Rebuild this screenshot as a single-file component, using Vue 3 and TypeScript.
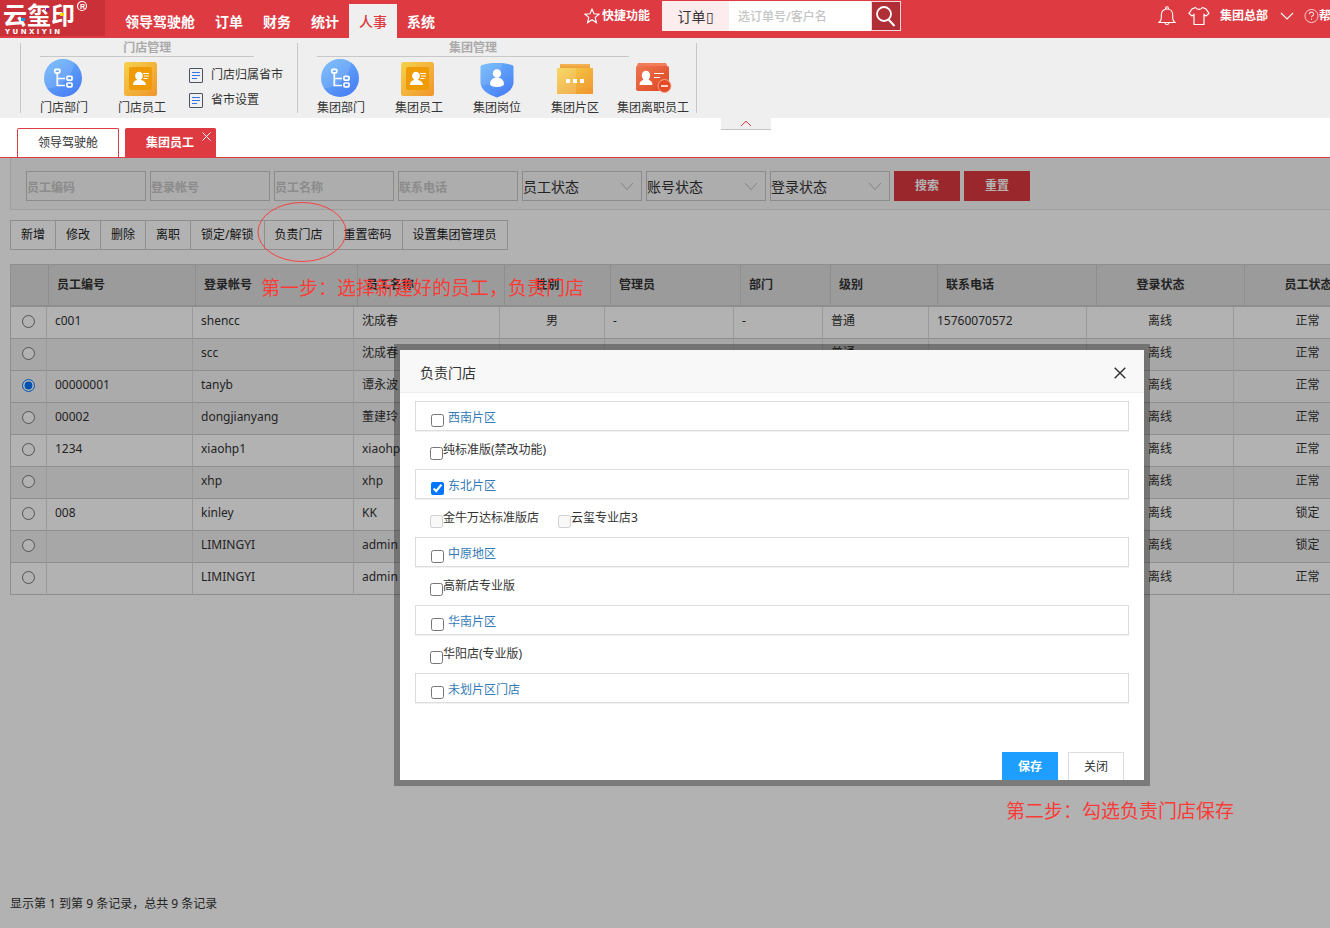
<script setup lang="ts">
import { ref } from 'vue'

interface Tool { label: string; icon: string }
interface Column { label: string; head: number; body: number; center?: boolean }
interface Store { name: string; locked?: boolean }
interface Area { name: string; checked: boolean; stores: Store[] }

const menus: string[] = ['领导驾驶舱', '订单', '财务', '统计', '人事', '系统']
const activeMenu = ref('人事')

const storeTools: Tool[] = [
  { label: '门店部门', icon: 'dept' },
  { label: '门店员工', icon: 'staff' },
]
const storeLinks: string[] = ['门店归属省市', '省市设置']
const groupTools: Tool[] = [
  { label: '集团部门', icon: 'dept' },
  { label: '集团员工', icon: 'staff' },
  { label: '集团岗位', icon: 'post' },
  { label: '集团片区', icon: 'area' },
  { label: '集团离职员工', icon: 'leave' },
]
const ribbon = [
  { title: '门店管理', tools: storeTools, links: storeLinks },
  { title: '集团管理', tools: groupTools, links: [] as string[] },
]

const textFilters: string[] = ['员工编码', '登录帐号', '员工名称', '联系电话']
const selectFilters: string[] = ['员工状态', '账号状态', '登录状态']
const actions: string[] = ['新增', '修改', '删除', '离职', '锁定/解锁', '负责门店', '重置密码', '设置集团管理员']

const columns: Column[] = [
  { label: '', head: 38, body: 36, center: true },
  { label: '员工编号', head: 147, body: 146 },
  { label: '登录帐号', head: 162, body: 161 },
  { label: '员工名称', head: 147, body: 146 },
  { label: '性别', head: 106, body: 105, center: true },
  { label: '管理员', head: 130, body: 129 },
  { label: '部门', head: 90, body: 89 },
  { label: '级别', head: 107, body: 106 },
  { label: '联系电话', head: 159, body: 158 },
  { label: '登录状态', head: 148, body: 147, center: true },
  { label: '员工状态', head: 148, body: 148, center: true },
]
const rows: string[][] = [
  ['c001', 'shencc', '沈成春', '男', '-', '-', '普通', '15760070572', '离线', '正常'],
  ['', 'scc', '沈成春', '', '', '', '普通', '', '离线', '正常'],
  ['00000001', 'tanyb', '谭永波', '', '', '', '', '', '离线', '正常'],
  ['00002', 'dongjianyang', '董建玲', '', '', '', '', '', '离线', '正常'],
  ['1234', 'xiaohp1', 'xiaohp1', '', '', '', '', '', '离线', '正常'],
  ['', 'xhp', 'xhp', '', '', '', '', '', '离线', '正常'],
  ['008', 'kinley', 'KK', '', '', '', '', '', '离线', '锁定'],
  ['', 'LIMINGYI', 'admin', '', '', '', '', '', '离线', '锁定'],
  ['', 'LIMINGYI', 'admin', '', '', '', '', '', '离线', '正常'],
]
const selected = ref(2)

const areas = ref<Area[]>([
  { name: '西南片区', checked: false, stores: [{ name: '纯标准版(禁改功能)' }] },
  { name: '东北片区', checked: true, stores: [{ name: '金牛万达标准版店', locked: true }, { name: '云玺专业店3', locked: true }] },
  { name: '中原地区', checked: false, stores: [{ name: '高新店专业版' }] },
  { name: '华南片区', checked: false, stores: [{ name: '华阳店(专业版)' }] },
  { name: '未划片区门店', checked: false, stores: [] },
])
</script>

<template>
  <div class="page">
    <svg class="defs" aria-hidden="true">
      <defs>
        <linearGradient id="g-blue" x1="0" y1="0" x2="0.7" y2="1"><stop offset="0" stop-color="#6db9fb" /><stop offset="1" stop-color="#4a80f5" /></linearGradient>
        <linearGradient id="g-gold" x1="0" y1="0" x2="1" y2="1"><stop offset="0" stop-color="#f5d24c" /><stop offset="1" stop-color="#f0952c" /></linearGradient>
        <linearGradient id="g-red" x1="0" y1="0" x2="1" y2="1"><stop offset="0" stop-color="#ec7650" /><stop offset="1" stop-color="#df4520" /></linearGradient>
      </defs>
    </svg>

    <header class="topbar">
      <a class="logo" href="#" aria-label="云玺印">
        <svg width="105" height="36" viewBox="0 0 105 36">
          <text class="logo-name" x="3" y="24">云玺印</text>
          <text class="logo-latin" x="5" y="34">Y U N X I Y I N</text>
          <rect x="21" y="18" width="4" height="3" fill="#00a0e9" />
          <rect x="46" y="8" width="3" height="3" fill="#8a1b8f" />
          <rect x="60" y="13" width="4" height="3" fill="#ffd800" />
          <circle cx="82" cy="6" r="4.500" fill="none" stroke="#fff" stroke-width="1.200" />
          <text class="logo-mark" x="80" y="9">R</text>
        </svg>
      </a>
      <nav class="menu">
        <a v-for="m in menus" :key="m" href="#" :class="{ active: m === activeMenu }" @click.prevent="activeMenu = m">{{ m }}</a>
      </nav>
      <a class="quick" href="#">
        <svg width="16" height="16" viewBox="0 0 16 16"><path d="M8 1.2 10 5.8 15 6.2 11.2 9.4 12.4 14.6 8 11.8 3.6 14.6 4.8 9.4 1 6.2 6 5.8Z" fill="none" stroke="#fff" stroke-width="1.2" /></svg>
        快捷功能
      </a>
      <form class="search" @submit.prevent>
        <button type="button" class="scope">订单▯</button>
        <input type="text" placeholder="选订单号/客户名" aria-label="选订单号/客户名" />
        <button type="submit" class="go" aria-label="查询">
          <svg width="22" height="24" viewBox="0 0 22 24"><circle cx="9" cy="10" r="7" fill="none" stroke="#fff" stroke-width="1.8" /><path d="M13.5 15.5 19.5 22" stroke="#fff" stroke-width="2" /></svg>
        </button>
      </form>
      <div class="account">
        <svg width="18" height="20" viewBox="0 0 18 20" fill="none" stroke="#fff" stroke-width="1.1"><path d="M7.6 3V2.2a1.4 1.4 0 0 1 2.8 0V3M1 16.5h16c-1.900-1.300-2.300-2.600-2.300-4.500V9c0-3.500-2.200-6-5.700-6S3.300 5.500 3.300 9v3c0 1.900-.4 3.200-2.300 4.500ZM7 17c.3 2 3.700 2 4 0" /></svg>
        <svg width="22" height="20" viewBox="0 0 22 20" fill="none" stroke="#fff" stroke-width="1.2"><path d="M7.500 1.500c1.500 2.500 5.500 2.500 7 0L18 3l3 4.500-3 2.500-2-1.500V18.500H6V8.500L4 10 1 7.500 4 3Z" /></svg>
        <a href="#" class="org">集团总部</a>
        <svg class="caret" width="14" height="8" viewBox="0 0 14 8"><path d="M1 1 7 7 13 1" fill="none" stroke="#fff" stroke-width="1.1" /></svg>
        <a href="#" class="help">
          <svg width="15" height="16" viewBox="0 0 16 16" fill="none" stroke="#fbd5d7"><circle cx="8" cy="8" r="7" /><path d="M5.700 6.200c0-3 4.600-3 4.600-.2C10.300 7.800 8 7.700 8 9.500M8 11v1.300" stroke-width="1.200" /></svg>帮助
        </a>
      </div>
    </header>

    <section class="ribbon">
      <div v-for="g in ribbon" :key="g.title" class="group">
        <div class="group-title">{{ g.title }}</div>
        <div class="group-body">
          <a v-for="t in g.tools" :key="t.label" class="tool" href="#">
            <svg v-if="t.icon === 'dept'" width="40" height="40" viewBox="0 0 40 40">
              <circle cx="19" cy="20" r="19" fill="url(#g-blue)" />
              <path d="M0 20a19 19 0 0 1 30-15C29 17 18 30 3 30.500A19 19 0 0 1 0 20Z" fill="#fff" opacity=".13" />
              <g fill="none" stroke="#fff" stroke-width="1.700"><rect x="10.800" y="11.300" width="5" height="3.600" rx=".8" /><path d="M13.300 15V27.500H21M13.300 20.500H21" /><rect x="23" y="18.300" width="5" height="3.800" rx=".8" /><rect x="23" y="25" width="5" height="3.800" rx=".8" /></g>
            </svg>
            <svg v-else-if="t.icon === 'staff'" width="40" height="40" viewBox="0 0 40 40">
              <rect x="2" y="4" width="33" height="34" rx="2.500" fill="url(#g-gold)" />
              <rect x="7" y="9" width="23" height="23" rx="2" fill="#ee9b05" />
              <path d="M11 27c0-3 1.600-4.200 4.300-5.200-3.500-2.300-2.700-8 1.700-8s5.200 5.700 1.700 8c2.700 1 5.300 2.200 5.300 5.200Z" fill="#fff" />
              <path d="M21 15.500h6M22 18h5M21.500 20.500h4" stroke="#fff" />
            </svg>
            <svg v-else-if="t.icon === 'post'" width="40" height="40" viewBox="0 0 40 40">
              <path d="M20 5c6 0 11 .5 15.500 2.300a2 2 0 0 1 1 1.700V24c0 8-8 12.500-16.500 15.500C11.500 36.500 3.500 32 3.500 24V9a2 2 0 0 1 1-1.700C9 5.500 14 5 20 5Z" fill="url(#g-blue)" />
              <path d="M3.500 9a2 2 0 0 1 1-1.700C11 5 19 5 25 5.300 24 18 15 28 4 27Z" fill="#fff" opacity=".1" />
              <circle cx="20" cy="15.500" r="4.200" fill="#fff" /><path d="M13 26c0-4.500 4-6.500 7-6.500s7 2 7 6.500c0 4-14 4-14 0Z" fill="#fff" />
            </svg>
            <svg v-else-if="t.icon === 'area'" width="40" height="40" viewBox="0 0 40 40">
              <rect x="5" y="6" width="30" height="5" fill="#f0a440" /><path d="M5 7h30" stroke="#f5bc68" />
              <rect x="2" y="10" width="36" height="26" fill="url(#g-gold)" />
              <path d="M2 10h19v26H2Z" fill="#fff" opacity=".14" />
              <path d="M11 21h4v4h-4ZM18 21h4v4h-4ZM25 21h4v4h-4Z" fill="#fff" />
            </svg>
            <svg v-else width="40" height="40" viewBox="0 0 40 40">
              <path d="M5 5h28l2 5H3Z" fill="#f47b57" />
              <rect x="3" y="8" width="33" height="25" rx="2" fill="url(#g-red)" />
              <path d="M6.500 27c0-3 1.800-4.600 4-5.200-3-3.800-1.500-9 2.500-9s5.500 5.200 2.500 9c2.200.6 4 2.200 4 5.200Z" fill="#fff" />
              <path d="M21 15.500h10M21 19.500h6" stroke="#fff" stroke-width="1.200" />
              <circle cx="31.500" cy="28" r="6.500" fill="#e34c26" stroke="#f3a48c" /><path d="M28 28h7" stroke="#fff" stroke-width="1.500" />
            </svg>
            <span>{{ t.label }}</span>
          </a>
          <div v-if="g.links.length" class="links">
            <a v-for="l in g.links" :key="l" href="#">
              <svg width="14" height="15" viewBox="0 0 14 15" fill="none"><rect x=".5" y=".5" width="13" height="14" rx=".5" stroke="#4c5460" /><path d="M3 4.500h8M3 7.500h8M3 10.500h5" stroke="#3474f0" /></svg>
              {{ l }}
            </a>
          </div>
        </div>
      </div>
      <button type="button" class="collapse" aria-label="收起">
        <svg width="12" height="7" viewBox="0 0 12 7"><path d="M1 6 6 1.200 11 6" fill="none" stroke="#dd3a41" /></svg>
      </button>
    </section>

    <nav class="tabs">
      <a class="tab" href="#">领导驾驶舱</a>
      <a class="tab current" href="#">集团员工
        <svg class="tab-close" width="9" height="9" viewBox="0 0 9 9"><path d="M.5.500l8 8M8.500.500l-8 8" stroke="#fff" /></svg>
      </a>
    </nav>

    <main class="work">
      <form class="filters" @submit.prevent>
        <input v-for="f in textFilters" :key="f" type="text" :placeholder="f" :aria-label="f" />
        <div v-for="f in selectFilters" :key="f" class="pick">
          <select :aria-label="f"><option>{{ f }}</option></select>
          <svg width="14" height="9" viewBox="0 0 14 9"><path d="M1 1 7 7.500 13 1" fill="none" stroke="#bbb" /></svg>
        </div>
        <button type="submit">搜索</button>
        <button type="reset">重置</button>
      </form>

      <div class="actions">
        <button v-for="a in actions" :key="a" type="button">{{ a }}</button>
      </div>

      <div class="grid">
        <table class="grid-head">
          <colgroup><col v-for="c in columns" :key="c.label" :style="{ width: c.head + 'px' }" /></colgroup>
          <thead>
            <tr><th v-for="c in columns" :key="c.label" :class="{ center: c.center }">{{ c.label }}</th></tr>
          </thead>
        </table>
        <table class="grid-body">
          <colgroup><col v-for="c in columns" :key="c.label" :style="{ width: c.body + 'px' }" /></colgroup>
          <tbody>
            <tr v-for="(r, i) in rows" :key="i" :class="{ picked: selected === i }">
              <td class="center"><input v-model="selected" type="radio" name="employee" :value="i" :aria-label="r[1]" /></td>
              <td v-for="(v, j) in r" :key="j" :class="{ center: columns[j + 1].center }">{{ v }}</td>
            </tr>
          </tbody>
        </table>
      </div>

      <p class="summary">显示第 1 到第 9 条记录，总共 9 条记录</p>

      <div class="shade"></div>

      <section class="dialog" role="dialog" aria-label="负责门店">
        <header class="dialog-head">
          <h2>负责门店</h2>
          <button type="button" aria-label="关闭窗口">
            <svg width="12" height="12" viewBox="0 0 12 12"><path d="M.700.700l10.600 10.600M11.300.700.700 11.300" stroke="#2d2f33" stroke-width="1.400" /></svg>
          </button>
        </header>
        <div class="dialog-body">
          <template v-for="a in areas" :key="a.name">
            <label class="area"><input v-model="a.checked" type="checkbox" /><span>{{ a.name }}</span></label>
            <div v-if="a.stores.length" class="stores">
              <label v-for="s in a.stores" :key="s.name"><input type="checkbox" :disabled="s.locked" /><span>{{ s.name }}</span></label>
            </div>
          </template>
        </div>
        <footer class="dialog-foot">
          <button type="button" class="save">保存</button>
          <button type="button">关闭</button>
        </footer>
      </section>

      <svg class="ring" width="90" height="62" viewBox="0 0 90 62"><ellipse cx="45" cy="31" rx="44" ry="29.500" fill="none" stroke="#f8403e" /></svg>
      <p class="note first">第一步：选择新建好的员工，负责门店</p>
      <p class="note second">第二步：勾选负责门店保存</p>
    </main>
  </div>
</template>

<style>
body {
  margin: 0;
  overflow: hidden;
}
</style>

<style scoped>
.page {
  display: flex;
  flex-direction: column;
  min-height: 100vh;
  overflow: hidden;
  background: #fff;
  color: #333;
  font: 12px/20px "Noto Sans", "Noto Sans CJK SC", sans-serif;
}
.page *, .page *::before, .page *::after { box-sizing: border-box; }
a { color: inherit; text-decoration: none; }
button, input, select { font: inherit; color: inherit; margin: 0; }
button { cursor: pointer; padding: 0; }
svg { display: block; flex: none; }
.defs { position: absolute; width: 0; height: 0; }
p, h2 { margin: 0; }

.topbar {
  display: flex;
  align-items: flex-start;
  height: 38px;
  background: #dd3a41;
  color: #fff;
  white-space: nowrap;
}
.logo { background: #c93038; }
.logo text { fill: #fff; }
.logo .logo-name { font: 700 24px "Noto Sans CJK SC", sans-serif; }
.logo .logo-latin { font: 700 7px "DejaVu Sans", sans-serif; }
.logo .logo-mark { font: 700 7px "Liberation Sans", sans-serif; }
.menu { display: flex; padding: 4px 0 0 10px; }
.menu a { padding: 2px 10px 0; font-size: 14px; font-weight: 700; line-height: 32px; }
.menu .active { background: #efefef; color: #dd3a41; font-weight: 500; }
.quick { display: flex; align-items: center; gap: 2px; height: 32px; margin-left: 139px; font-weight: 700; }
.search { display: flex; height: 30px; margin: 1px 0 0 12px; }
.scope { width: 67px; border: 0; padding-top: 2px; background: #fdeced; color: #333; font-size: 14px; }
.search input { width: 142px; border: 0; padding: 2px 9px 0; background: #fff; color: #333; outline: 0; }
.search input::placeholder { color: #c4c4c4; font-weight: 500; }
.go { display: grid; place-items: center; width: 30px; border: 1px solid #f6d7d9; background: #b02e35; }
.account { display: flex; align-items: center; gap: 12px; height: 32px; margin-left: 257px; font-weight: 700; }
.org { margin-left: -2px; }
.caret { margin-right: -2px; }
.help { display: flex; align-items: center; }

.ribbon { position: relative; display: flex; height: 80px; padding: 5px 20px; background: #efefef; }
.group { padding: 0 4px; border-left: 1px solid #c8c8c8; }
.group:nth-child(2) { border-right: 1px solid #c8c8c8; }
.group-title { width: 80%; height: 14px; margin-left: 15px; border-bottom: 1px solid #c8c8c8; color: #aaa; line-height: 10px; text-align: center; font-weight: 600; }
.group-body { display: flex; }
.tool { display: flex; flex-direction: column; align-items: center; width: 78px; padding-top: 1px; white-space: nowrap; }
.tool span { line-height: 20px; }
.links { display: flex; flex-direction: column; gap: 5px; padding: 8px 10px 0 8px; }
.links a { display: flex; align-items: center; gap: 8px; white-space: nowrap; }
.collapse { position: absolute; left: 721px; top: 80px; display: grid; place-items: center; width: 50px; height: 12px; border: 0; border-bottom: 1px solid #c4c4c4; background: #efefef; }

.tabs { display: flex; gap: 6px; height: 40px; padding: 10px 17px 0; border-bottom: 1px solid #dd3a41; }
.tab { position: relative; padding: 0 20px; border: 1px solid #dd3a41; border-bottom: 0; border-radius: 2px 2px 0 0; line-height: 28px; }
.tab.current { padding-right: 21px; background: #dd3a41; color: #fff; font-weight: 700; }
.tab-close { position: absolute; right: 4px; top: 3px; }

.work { position: relative; display: flex; flex: 1; flex-direction: column; padding-left: 10px; overflow: hidden; }
.filters { display: flex; gap: 4px; padding: 13px 15px 8px; border: 1px solid #e2e2e2; border-width: 0 0 1px 1px; background: #f8f8f8; }
.filters input, .filters select { width: 120px; height: 30px; border: 1px solid #c8c8c8; border-radius: 0; padding: 2px 0 0; background: transparent; outline: 0; }
.filters input::placeholder { color: #c8c8c8; font-weight: 600; }
.pick { position: relative; }
.pick svg { position: absolute; right: 8px; top: 11px; pointer-events: none; }
.filters select { appearance: none; font-size: 14px; }
.filters button { width: 66px; height: 30px; border: 0; background: #dd3840; color: #fff; font-weight: 700; }
.actions { display: flex; margin: 10px 0 14px; }
.actions button { height: 30px; padding: 0 10px; border: 1px solid #ccc; border-right: 0; background: transparent; color: #222; white-space: nowrap; }
.actions button:last-child { border-right: 1px solid #ccc; }

table { width: 100%; border-collapse: separate; border-spacing: 0; table-layout: fixed; }
th, td { padding: 0 8px; text-align: left; white-space: nowrap; }
.grid-head { border-left: 1px solid #ccc; }
th { height: 43px; border-top: 1px solid #ccc; border-bottom: 2px solid #ccc; border-right: 1px solid #ccc; background: #dfdfdf; }
th.center { padding-right: 28px; text-align: center; }
.grid-body { border-left: 1px solid #ccc; }
td { height: 32px; padding-bottom: 4px; border-bottom: 1px solid #ccc; border-right: 1px solid #ddd; }
td.center { text-align: center; }
tr:nth-child(even) td { background: #f0f0f0; }
tr.picked td { background: #f5f5f5; }
td input { display: block; width: 13px; height: 13px; margin: 2px auto 0; }
.summary { margin-top: auto; padding-bottom: 14px; }

.shade { position: absolute; inset: 0; background: rgba(0, 0, 0, 0.3); }

.dialog { position: absolute; left: 394px; top: 186px; width: 756px; border: 6px solid rgba(0, 0, 0, 0.31); background: #fff; background-clip: padding-box; }
.dialog-head { display: flex; align-items: center; justify-content: space-between; height: 43px; padding: 4px 18px 0 20px; border-bottom: 1px solid #eee; background: #f8f8f8; }
.dialog-head h2 { font-size: 14px; font-weight: 400; line-height: 20px; }
.dialog-head button { border: 0; background: none; }
.dialog-body { padding: 8px 15px 0; }
.dialog-body label { display: flex; align-items: center; }
.dialog-body input { width: 13px; height: 13px; }
.area { gap: 4px; height: 30px; padding: 3px 15px 0; border: 1px solid #ddd; box-shadow: 0 1px 1px rgba(0, 0, 0, 0.05); color: #337ab7; }
.area input { margin-top: 6px; }
.stores { display: flex; gap: 19px; height: 38px; padding: 0 15px; }
.stores input { margin-top: 7px; }
.dialog-foot { display: flex; gap: 10px; justify-content: flex-end; padding: 49px 20px 0; }
.dialog-foot button { width: 56px; height: 28px; border: 1px solid #dedede; border-bottom: 0; background: #fff; }
.dialog-foot .save { border: 0; padding-top: 2px; background: #1e9fff; color: #fff; font-weight: 700; }

.ring { position: absolute; left: 257px; top: 43px; }
.note { position: absolute; color: #fb3b38; font-size: 19px; line-height: 24px; white-space: nowrap; }
.first { left: 261px; top: 118px; }
.second { left: 1006px; top: 641px; }
</style>
